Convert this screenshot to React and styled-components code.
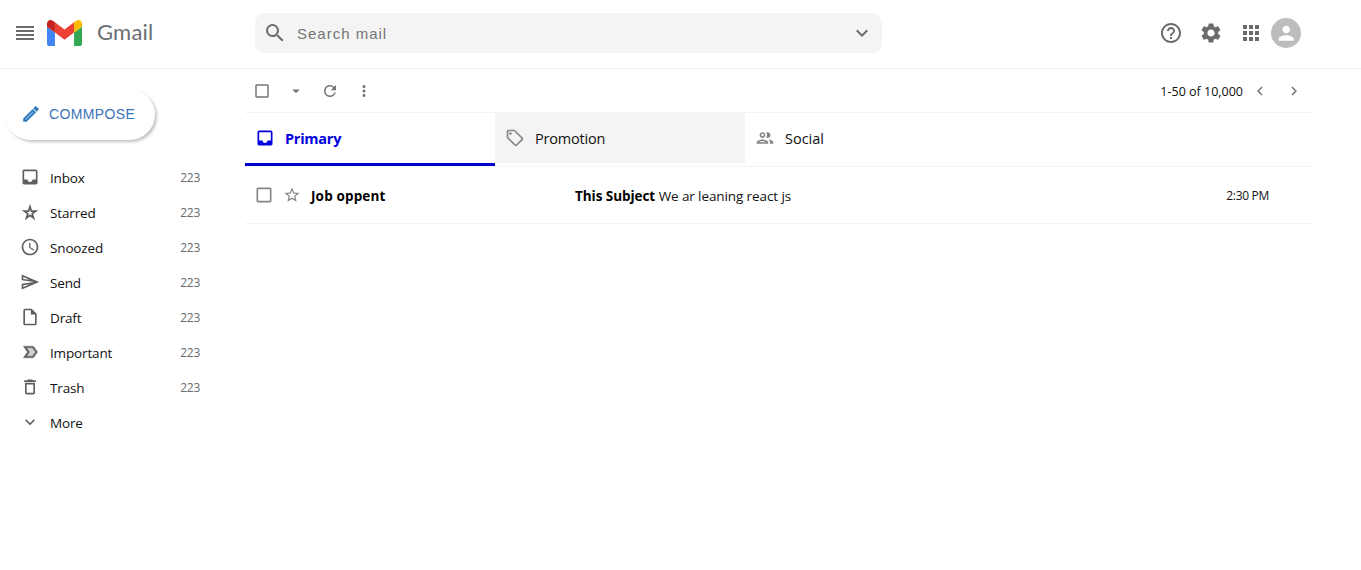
import React from "react";
import styled, { createGlobalStyle, css } from "styled-components";
import {
  MdReorder, MdSearch, MdExpandMore, MdHelpOutline, MdSettings, MdApps, MdPerson,
  MdInbox, MdAccessTime, MdOutlineSend,
  MdOutlineInsertDriveFile, MdDeleteOutline, MdCheckBoxOutlineBlank,
  MdArrowDropDown, MdRefresh, MdMoreVert, MdChevronLeft, MdChevronRight,
  MdOutlineLocalOffer, MdStarBorder,
} from "react-icons/md";

const GlobalStyle = createGlobalStyle`
  * { box-sizing: border-box; margin: 0; padding: 0; }
  body { background: #fff; color: #000; font-family: "Segoe UI", "Open Sans", sans-serif; }
  svg { display: block; flex-shrink: 0; }
`;

const Header = styled.header`
  display: flex;
  align-items: center;
  height: 69px;
  padding: 0 60px 2px 13px;
  border-bottom: 1px solid #f4f4f4;
  color: #6b6b6b;
`;

const Brand = styled.div`
  display: flex;
  align-items: center;
  width: 242px;
`;

const LogoMark = styled.svg`
  width: 35px;
  height: 26px;
  margin-left: 10px;
`;

const LogoText = styled.span`
  margin: 0 0 2px 15px;
  font: 400 22px/28px Lato, sans-serif;
  letter-spacing: 0.2px;
  color: #6a6d71;
`;

const SearchBar = styled.div`
  display: flex;
  align-items: center;
  width: 627px;
  height: 40px;
  padding: 0 8px;
  border-radius: 10px;
  background: #f4f4f4;
`;

const SearchInput = styled.input`
  flex: 1;
  margin: 0 0 0 10px;
  border: 0;
  outline: 0;
  background: transparent;
  font: 15px "Liberation Sans", Arial, sans-serif;
  letter-spacing: 1px;
  color: #757575;
  &::placeholder { color: #757575; opacity: 1; }
`;

const HeaderActions = styled.div`
  display: flex;
  align-items: center;
  gap: 16px;
  margin-left: auto;
`;

const Avatar = styled.div`
  display: flex;
  align-items: center;
  justify-content: center;
  width: 30px;
  height: 30px;
  margin-left: -8px;
  border-radius: 50%;
  background: #bdbdbd;
  color: #fff;
`;

const Body = styled.div`
  display: flex;
`;

const Sidebar = styled.aside`
  width: 245px;
  padding: 20px 0 0 5px;
`;

const ComposeButton = styled.button`
  display: flex;
  align-items: center;
  width: 150px;
  height: 51px;
  padding: 0 0 1px 16px;
  border: 0;
  border-radius: 26px;
  background: #fff;
  box-shadow: 2px 2px 3px #c4c4c4;
  color: #2a78bd;
  span {
    margin: 0 0 1px 8px;
    font: 14px "Liberation Sans", Arial, sans-serif;
    letter-spacing: 0.38px;
    color: #3a72b8;
  }
`;

const Folders = styled.nav`
  margin-top: 19px;
`;

const FolderRow = styled.div`
  display: flex;
  align-items: center;
  width: 195px;
  height: 35px;
  padding-left: 15px;
  color: #5f5f5f;
`;

const Text = styled.span`
  font-size: ${(p) => p.$size || 14}px;
  line-height: 20px;
  letter-spacing: ${(p) => p.$spacing || 0}px;
  white-space: pre;
`;

const FolderName = styled(Text)`
  margin: 2px 0 0 10px;
  color: #111;
`;

const Count = styled(Text)`
  margin: 2px 0 0 auto;
  color: #6b6b6b;
`;

const Main = styled.main`
  width: 1067px;
`;

const Toolbar = styled.div`
  display: flex;
  align-items: center;
  gap: 16px;
  height: 44px;
  padding: 0 9px 0 8px;
  border-bottom: 1px solid #f4f4f4;
  color: #757575;
`;

const Range = styled(Text)`
  margin: 2px -8px 0 auto;
  color: #111;
`;

const Tabs = styled.div`
  display: flex;
  height: 54px;
  border-bottom: 1px solid #f4f4f4;
`;

const Tab = styled.div`
  display: flex;
  align-items: center;
  width: 250px;
  height: ${(p) => (p.$active ? 53 : 50)}px;
  padding: 0 10px;
  color: #858585;
  background: ${(p) => (p.$shaded ? "#f4f4f4" : "transparent")};
  ${(p) => p.$active && css`
    color: #0000e0;
    font-weight: 700;
    border-bottom: 3px solid #0000d0;
  `}
`;

const TabName = styled(Text)`
  margin: 2px 0 0 10px;
  color: ${(p) => (p.$active ? "inherit" : "#111")};
`;

const MailRow = styled.div`
  display: flex;
  align-items: center;
  height: 57px;
  padding: 0 43px 0 9px;
  border-bottom: 1px solid #f4f4f4;
  color: #858585;
`;

const Sender = styled(Text)`
  width: 264px;
  margin: 2px 0 0 10px;
  color: #000;
  font-weight: 700;
`;

const Subject = styled.div`
  display: flex;
  margin-top: 2px;
  color: #111;
`;

const Bold = styled(Text)`
  font-weight: 700;
  color: #000;
`;

const Time = styled(Text)`
  margin: 2px 0 0 auto;
  color: #111;
`;

const StarIcon = styled(MdStarBorder)`
  margin-left: 9px;
`;

function GmailMark() {
  return (
    <LogoMark viewBox="52 42 88 66" preserveAspectRatio="none">
      <path fill="#4285f4" d="M58 108h14V74L52 59v43c0 3.32 2.69 6 6 6" />
      <path fill="#34a853" d="M120 108h14c3.32 0 6-2.69 6-6V59l-20 15" />
      <path fill="#fbbc04" d="M120 48v26l20-15v-8c0-7.42-8.47-11.65-14.4-7.2" />
      <path fill="#ea4335" d="M72 74V48l24 18 24-18v26L96 92" />
      <path fill="#c5221f" d="M52 51v8l20 15V48l-5.6-4.2c-5.94-4.45-14.4-.22-14.4 7.2" />
    </LogoMark>
  );
}

function PencilIcon({ size }) {
  return (
    <svg width={size} height={size} viewBox="0 0 24 24" fill="currentColor">
      <path opacity=".35" d="M5 18.080V19h.920l9.060-9.060-.920-.920z" />
      <path
        stroke="currentColor"
        strokeWidth=".6"
        d="M20.710 7.040c.390-.390.390-1.020 0-1.410l-2.340-2.340c-.200-.200-.450-.290-.710-.290s-.510.100-.700.290l-1.830 1.830 3.750 3.750 1.830-1.830zM3 17.250V21h3.750L17.810 9.940l-3.750-3.750L3 17.250zM5.920 19H5v-.920l9.060-9.060.920.920L5.920 19z"
      />
    </svg>
  );
}

function StarredIcon({ size }) {
  return (
    <svg width={size} height={size} viewBox="0 0 24 24" fill="currentColor">
      <path d="M12 8.890l.940 3.110h2.820l-2.270 1.620.930 3.010L12 14.790l-2.420 1.840.930-3.010L8.240 12h2.820L12 8.890M12 2l-2.420 8H2l6.170 4.410L5.830 22 12 17.310 18.180 22l-2.350-7.590L22 10h-7.580L12 2z" />
    </svg>
  );
}

function ImportantIcon({ size }) {
  return (
    <svg width={size} height={size} viewBox="0 0 24 24" fill="currentColor">
      <path opacity=".3" d="M15 7H7.890l3.570 5-3.560 5H15l3.550-5z" />
      <path
        stroke="currentColor"
        strokeWidth=".5"
        d="M16.630 5.840C16.270 5.330 15.670 5 15 5H4l5 7-5 6.990h11c.670 0 1.270-.320 1.630-.830L21 12l-4.370-6.160zM15 17H7.890l3.570-5L7.890 7H15l3.550 5L15 17z"
      />
    </svg>
  );
}

function PeopleIcon({ size }) {
  return (
    <svg width={size} height={size} viewBox="0 0 24 24" fill="currentColor">
      <path d="M9 13.750c-2.340 0-7 1.170-7 3.500V19h14v-1.750c0-2.330-4.660-3.500-7-3.500zM4.340 17c.840-.580 2.870-1.250 4.660-1.250s3.820.670 4.660 1.250H4.340zM9 12c1.930 0 3.500-1.570 3.500-3.500S10.930 5 9 5 5.500 6.570 5.500 8.500 7.070 12 9 12zm0-5c.830 0 1.500.670 1.500 1.500S9.830 10 9 10s-1.500-.670-1.500-1.500S8.170 7 9 7zm7.040 6.810c1.160.840 1.960 1.960 1.960 3.440V19h4v-1.750c0-2.020-3.500-3.170-5.960-3.440zM15 12c1.930 0 3.500-1.570 3.500-3.500S16.930 5 15 5c-.540 0-1.040.130-1.500.350.630.890 1 1.980 1 3.150s-.370 2.260-1 3.150c.460.220.960.350 1.500.350z" />
    </svg>
  );
}

const folders = [
  { name: "Inbox", Icon: MdInbox, count: 223 },
  { name: "Starred", Icon: StarredIcon, count: 223 },
  { name: "Snoozed", Icon: MdAccessTime, count: 223 },
  { name: "Send", Icon: MdOutlineSend, count: 223 },
  { name: "Draft", Icon: MdOutlineInsertDriveFile, count: 223 },
  { name: "Important", Icon: ImportantIcon, count: 223 },
  { name: "Trash", Icon: MdDeleteOutline, count: 223 },
  { name: "More", Icon: MdExpandMore },
];

export default function App() {
  return (
    <>
      <GlobalStyle />
      <Header>
        <Brand>
          <MdReorder size={24} />
          <GmailMark />
          <LogoText>Gmail</LogoText>
        </Brand>
        <SearchBar>
          <MdSearch size={24} />
          <SearchInput placeholder="Search mail" />
          <MdExpandMore size={24} />
        </SearchBar>
        <HeaderActions>
          <MdHelpOutline size={24} />
          <MdSettings size={24} />
          <MdApps size={24} />
          <Avatar><MdPerson size={22.5} /></Avatar>
        </HeaderActions>
      </Header>
      <Body>
        <Sidebar>
          <ComposeButton>
            <PencilIcon size={20} />
            <span>COMMPOSE</span>
          </ComposeButton>
          <Folders>
            {folders.map(({ name, Icon, count }) => (
              <FolderRow key={name}>
                <Icon size={20} />
                <FolderName $size={13.5} $spacing={-0.15}>{name}</FolderName>
                {count && <Count $size={12} $spacing={-0.3}>{count}</Count>}
              </FolderRow>
            ))}
          </Folders>
        </Sidebar>
        <Main>
          <Toolbar>
            <MdCheckBoxOutlineBlank size={18} />
            <MdArrowDropDown size={18} />
            <MdRefresh size={18} />
            <MdMoreVert size={18} />
            <Range $size={12.5}>1-50 of 10,000</Range>
            <MdChevronLeft size={18} />
            <MdChevronRight size={18} />
          </Toolbar>
          <Tabs>
            <Tab $active>
              <MdInbox size={20} />
              <TabName $active $size={14.5} $spacing={-0.25}>Primary</TabName>
            </Tab>
            <Tab $shaded>
              <MdOutlineLocalOffer size={20} />
              <TabName $size={14.5} $spacing={-0.2}>Promotion</TabName>
            </Tab>
            <Tab>
              <PeopleIcon size={20} />
              <TabName $size={14.5}>Social</TabName>
            </Tab>
          </Tabs>
          <MailRow>
            <MdCheckBoxOutlineBlank size={20} />
            <StarIcon size={18} />
            <Sender $size={13.5} $spacing={0.15}>Job oppent</Sender>
            <Subject>
              <Bold $size={13.5} $spacing={-0.05}>This Subject </Bold>
              <Text $size={13.5} $spacing={-0.1}>We ar leaning react js</Text>
            </Subject>
            <Time $size={12} $spacing={-0.3}>2:30 PM</Time>
          </MailRow>
        </Main>
      </Body>
    </>
  );
}
